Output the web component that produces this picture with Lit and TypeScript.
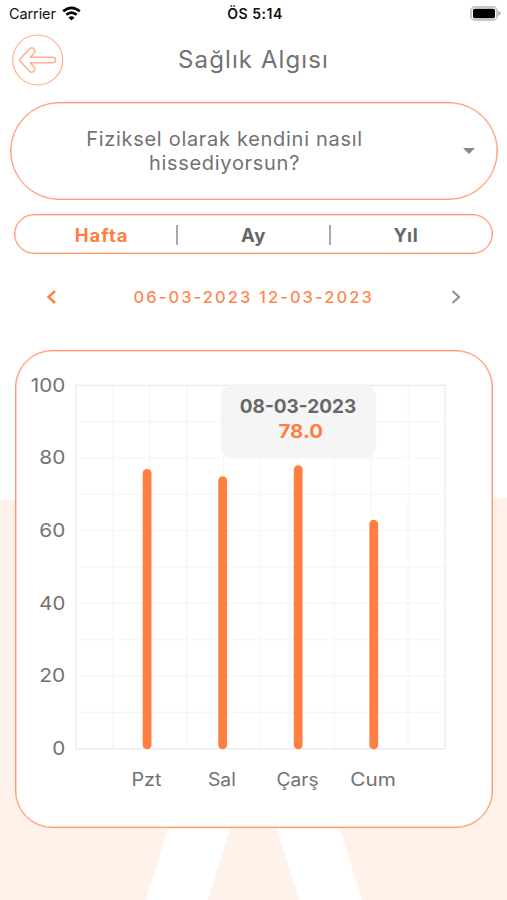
import { LitElement, html, svg, css } from "lit";
import { customElement, property } from "lit/decorators.js";

@customElement("status-bar")
class StatusBar extends LitElement {
  static styles = css`
    :host { display: grid; grid-template-columns: 1fr auto 1fr; align-items: center; height: 27px; padding: 0 6px 0 9px; color: #111; font: 14.5px/27px Inter, sans-serif; }
    .carrier { display: flex; align-items: center; gap: 6px; letter-spacing: -0.1px; }
    .wifi { position: relative; top: -0.5px; }
    .time { font-weight: 600; font-size: 14px; letter-spacing: 0.5px; }
    .battery { justify-self: end; display: block; }
  `;
  render() {
    return html`
      <div class="carrier">
        <span>Carrier</span>
        <svg class="wifi" width="19" height="15" viewBox="0 0 19 15" fill="none" stroke="#000" stroke-width="2.7">
          <path d="M1.2 5.3Q9.5 -1.7 17.8 5.3" />
          <path d="M4.3 8.8Q9.5 4.3 14.7 8.8" />
          <path d="M9.5 14.4L6.5 11.4Q9.5 8.9 12.5 11.4Z" fill="#000" stroke="none" />
        </svg>
      </div>
      <div class="time">ÖS 5:14</div>
      <svg class="battery" width="31" height="16" viewBox="0 0 31 16">
        <rect x="1" y="1" width="26" height="13" rx="4" fill="#fff" stroke="#c8c8c8" stroke-width="2" />
        <rect x="3" y="2.8" width="22" height="9.4" rx="1.8" fill="#000" />
        <path d="M28.2 5.1Q30.6 6.1 30.6 7.5T28.2 10.1Z" fill="#aaa" />
      </svg>
    `;
  }
}

interface Bar { label: string; value: number; width: number; }

@customElement("week-chart")
class WeekChart extends LitElement {
  @property({ attribute: false }) bars: Bar[] = [];

  static styles = css`
    :host { display: block; }
    .chart { display: block; font-family: Inter, "Open Sans", sans-serif; }
    .axis { fill: #727272; font-size: 19px; }
    .day { fill: #727272; font-size: 18px; }
    .grid { stroke: #f6f6f6; stroke-width: 1.2; }
    .frame { fill: none; stroke: #ebebeb; stroke-width: 1.3; }
    .bar { fill: #ff7f41; }
    .tip { fill: #f5f5f5; }
    .tip-date { fill: #686868; font-size: 19px; font-weight: 700; }
    .tip-value { fill: #ff7f41; font-size: 19px; font-weight: 700; }
  `;

  render() {
    const left = 61, top = 34.3, w = 369, h = 363.5;
    const steps = [1, 2, 3, 4, 5, 6, 7, 8, 9];
    return html`
      <svg class="chart" width="476" height="475" viewBox="0 0 476 475">
        ${steps.map((i) => svg`
          <path class="grid" d="M${left + (w * i) / 10} ${top}v${h}M${left} ${top + (h * i) / 10}h${w}" />`)}
        <rect class="frame" x=${left} y=${top} width=${w} height=${h} />
        ${[100, 80, 60, 40, 20, 0].map((v) => {
          const length = v === 100 ? 34.5 : v === 0 ? 13 : 26;
          return svg`<text class="axis" x=${50.3 - length} y=${top + h * (1 - v / 100) + 6.3} textLength=${length} lengthAdjust="spacingAndGlyphs">${v}</text>`;
        })}
        ${this.bars.map((b, i) => {
          const x = 132.1 + i * 75.55;
          const bh = (h * b.value) / 100;
          return svg`
            <rect class="bar" x=${x - 4.4} y=${top + h - bh} width="8.8" height=${bh + 0.5} rx="4.4" />
            <text class="day" x=${x - 0.7 - b.width / 2} y="434.8" textLength=${b.width} lengthAdjust="spacingAndGlyphs">${b.label}</text>`;
        })}
        <rect class="tip" x="205.5" y="33.7" width="155.8" height="73.5" rx="13" />
        <text class="tip-date" x="224.8" y="62.3" textLength="116.5" lengthAdjust="spacingAndGlyphs">08-03-2023</text>
        <text class="tip-value" x="263.5" y="87" textLength="44.5" lengthAdjust="spacingAndGlyphs">78.0</text>
      </svg>
    `;
  }
}

@customElement("app-root")
class AppRoot extends LitElement {
  static styles = css`
    :host { display: block; position: relative; width: 507px; height: 900px; overflow: hidden; background: #fff; color: #727272; font-family: Inter, "Open Sans", sans-serif; }
    * { box-sizing: border-box; }
    .backdrop { position: absolute; inset: 0; }
    .page { position: relative; display: flex; flex-direction: column; }
    .header { display: grid; grid-template-columns: 52px 1fr 52px; align-items: center; height: 65px; padding: 0 12px; }
    .back { display: block; }
    .title { margin: 0; text-align: center; font-size: 24px; font-weight: 400; letter-spacing: 1.1px; }
    .outlined { border: 1px solid #ff986b; box-shadow: inset 0 0 0 0.6px #ffb596; background: #fff; }
    .select { display: flex; align-items: center; height: 98px; margin: 10px 9.5px 0; padding: 0 22px 0 28px; border-radius: 49px; }
    .question { flex: 1; padding-right: 52px; text-align: center; font-size: 20px; line-height: 24.5px; letter-spacing: 0.7px; }
    .tabs { display: grid; grid-template-columns: 1fr 2px 150.5px 2px 1fr; align-items: center; height: 40px; margin: 14px 14px 0; padding-top: 1px; border-radius: 20px; text-align: center; font-size: 18.5px; font-weight: 700; letter-spacing: 0.6px; color: #666; }
    .active { color: #ff7f41; letter-spacing: 1px; }
    .first { padding-left: 12px; }
    .last { padding-right: 11px; }
    .divider { height: 20px; background: #aaa; }
    .range { display: flex; align-items: center; justify-content: space-between; height: 30px; margin: 27.5px 43.5px 0 44px; }
    .dates { color: #ff8750; font-size: 16.5px; font-weight: 500; letter-spacing: 2.08px; }
    .card { margin: 38.5px 14px 0 15px; height: 478px; border-radius: 37px; overflow: hidden; }
    .plot { margin-left: -1px; }
  `;

  private bars: Bar[] = [
    { label: "Pzt", value: 77, width: 30 },
    { label: "Sal", value: 75, width: 28 },
    { label: "Çarş", value: 78, width: 42 },
    { label: "Cum", value: 63, width: 45.5 },
  ];

  render() {
    return html`
      <svg class="backdrop" width="507" height="900" viewBox="0 0 507 900">
        <path d="M0 500H470L507 498V900H0Z" fill="#fff2ea" />
        <path d="M168 829h62l-22 71h-62ZM277 829h63l22 71h-63Z" fill="#fff" />
      </svg>
      <div class="page">
        <status-bar></status-bar>
        <header class="header">
          <svg class="back" width="52" height="52" viewBox="0 0 52 52" fill="none" stroke="#ffb08d" stroke-width="1.2" stroke-linejoin="round">
            <circle cx="25.7" cy="26" r="25" />
            <path stroke-width="1.5" d="M7.2 26L17.6 14.8A3.1 3.1 0 0 1 22.2 18.9L18.3 23.2H40.8A2.8 2.8 0 0 1 40.8 28.8H18.3L22.2 33.3A3.1 3.1 0 0 1 17.6 37.4Z" />
          </svg>
          <h1 class="title">Sağlık Algısı</h1>
        </header>
        <div class="select outlined">
          <div class="question">Fiziksel olarak kendini nasıl<br />hissediyorsun?</div>
          <svg width="12" height="6" viewBox="0 0 12 6"><path d="M0 0h12L6 6Z" fill="#888" /></svg>
        </div>
        <nav class="tabs outlined">
          <span class="active first">Hafta</span><i class="divider"></i>
          <span>Ay</span><i class="divider"></i>
          <span class="last">Yıl</span>
        </nav>
        <div class="range">
          <svg width="14" height="16" viewBox="0 0 14 16" fill="none" stroke="#ff7f41" stroke-width="2.4"><path d="M11 2L4.5 8L11 14" /></svg>
          <span class="dates">06-03-2023 12-03-2023</span>
          <svg width="14" height="16" viewBox="0 0 14 16" fill="none" stroke="#929292" stroke-width="2.2"><path d="M3.5 2L10 8L3.5 14" /></svg>
        </div>
        <section class="card outlined"><week-chart class="plot" .bars=${this.bars}></week-chart></section>
      </div>
    `;
  }
}
